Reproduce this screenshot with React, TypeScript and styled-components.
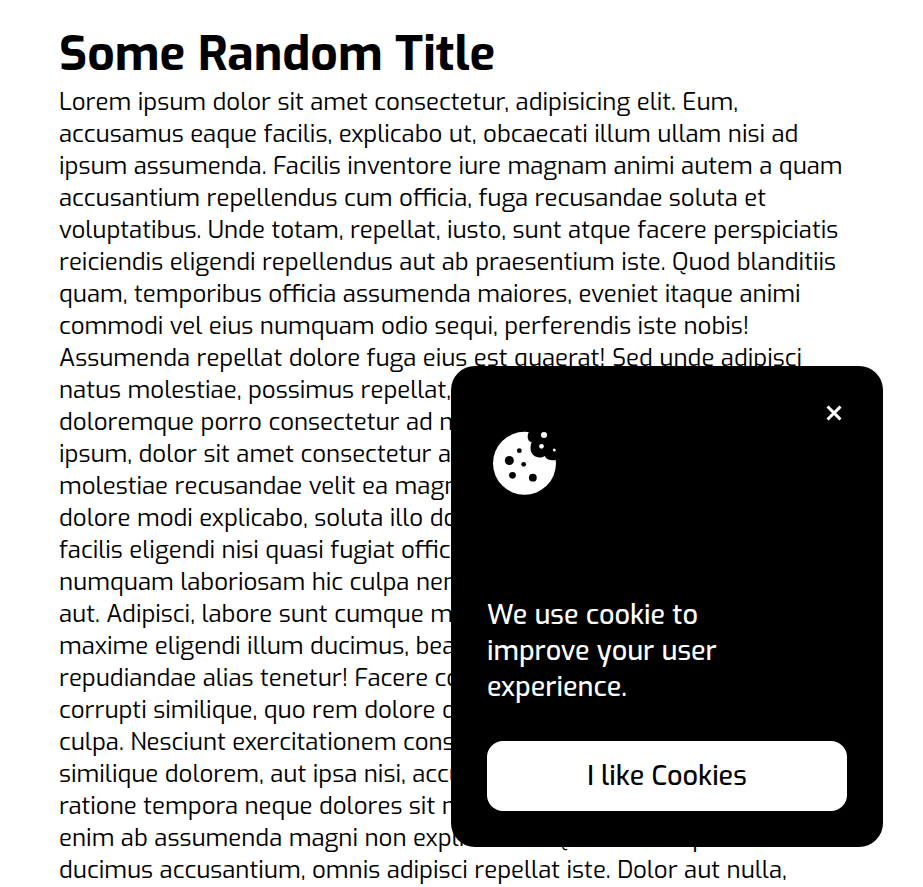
import React from "react";
import styled, { createGlobalStyle } from "styled-components";

const GlobalStyle = createGlobalStyle`
  *, *::before, *::after { box-sizing: border-box; }
  body {
    margin: 0;
    background: #fff;
    color: #000;
    font-family: Exo, "Exo 2", Roboto, sans-serif;
    overflow: hidden;
  }
`;

const Page = styled.main`
  height: 100vh;
  overflow: hidden;
  padding: 22px 59px 0;
`;

const Title = styled.h1`
  margin: 0;
  font-size: 48px;
  font-weight: 700;
  line-height: 64px;
`;

const Article = styled.p`
  margin: 0;
  font-size: 24px;
  font-weight: 400;
  line-height: 32px;
`;

const Line = styled.span`
  display: block;
  white-space: nowrap;
`;

const Banner = styled.aside`
  position: fixed;
  right: 40px;
  bottom: 40px;
  width: 432px;
  height: 481px;
  padding: 36px;
  display: flex;
  flex-direction: column;
  border-radius: 24px;
  background: #000;
  color: #fff;
`;

const BannerHeader = styled.div`
  display: flex;
  justify-content: flex-end;
  height: 29px;
`;

const CloseButton = styled.button`
  width: 26px;
  height: 22px;
  padding: 0;
  border: 0;
  background: none;
  color: inherit;
  display: grid;
  place-items: center;
`;

const CloseIcon = styled.svg`
  display: block;
  width: 16px;
  height: 16px;
`;

const CookieIcon = styled.svg`
  display: block;
  width: 64px;
  height: 64px;
  margin-left: 5px;
`;

const Message = styled.p`
  margin: auto 0 36px;
  font-size: 27px;
  font-weight: 500;
  line-height: 36px;
`;

const AcceptButton = styled.button`
  height: 70px;
  flex: none;
  border: 0;
  border-radius: 16px;
  background: #fff;
  color: #000;
  font: 500 27px/36px Exo, "Exo 2", Roboto, sans-serif;
  padding: 0;
`;

const lines = [
  "Lorem ipsum dolor sit amet consectetur, adipisicing elit. Eum,",
  "accusamus eaque facilis, explicabo ut, obcaecati illum ullam nisi ad",
  "ipsum assumenda. Facilis inventore iure magnam animi autem a quam",
  "accusantium repellendus cum officia, fuga recusandae soluta et",
  "voluptatibus. Unde totam, repellat, iusto, sunt atque facere perspiciatis",
  "reiciendis eligendi repellendus aut ab praesentium iste. Quod blanditiis",
  "quam, temporibus officia assumenda maiores, eveniet itaque animi",
  "commodi vel eius numquam odio sequi, perferendis iste nobis!",
  "Assumenda repellat dolore fuga eius est quaerat! Sed unde adipisci",
  "natus molestiae, possimus repellat, earum",
  "doloremque porro consectetur ad nisi",
  "ipsum, dolor sit amet consectetur adipisicing",
  "molestiae recusandae velit ea magnam",
  "dolore modi explicabo, soluta illo dolor",
  "facilis eligendi nisi quasi fugiat officiis",
  "numquam laboriosam hic culpa nemo",
  "aut. Adipisci, labore sunt cumque maxime",
  "maxime eligendi illum ducimus, beatae",
  "repudiandae alias tenetur! Facere corrupti",
  "corrupti similique, quo rem dolore dolorem",
  "culpa. Nesciunt exercitationem consequatur",
  "similique dolorem, aut ipsa nisi, accusamus",
  "ratione tempora neque dolores sit minima",
  "enim ab assumenda magni non explicabo id. Quia labore ipsa",
  "ducimus accusantium, omnis adipisci repellat iste. Dolor aut nulla,",
];

const message = ["We use cookie to", "improve your user", "experience."];

export default function App() {
  return (
    <>
      <GlobalStyle />
      <Page>
        <Title>Some Random Title</Title>
        <Article>
          {lines.map((line) => (
            <Line key={line}>{line} </Line>
          ))}
        </Article>
      </Page>
      <Banner>
        <BannerHeader>
          <CloseButton aria-label="Close">
            <CloseIcon viewBox="0 0 16 16" stroke="currentColor" strokeWidth="3" strokeLinecap="square">
              <path d="M2.600 2.600 13.400 13.400M13.400 2.600 2.600 13.400" />
            </CloseIcon>
          </CloseButton>
        </BannerHeader>
        <CookieIcon viewBox="66 63 192 192" aria-hidden="true">
          <circle cx="163.5" cy="160" r="94.5" fill="#fff" />
          <path
            d="M176 60V67C171 78 171 93 185 97C181 105 181 116 183 124C188 141 209 148 224 138C230 150 244 154 262 149V60Z"
            fill="#000"
          />
          <g fill="#fff">
            <circle cx="222" cy="75" r="9" />
            <circle cx="214.5" cy="109" r="7" />
            <circle cx="253" cy="120" r="4.5" />
          </g>
          <g fill="#000">
            <circle cx="118" cy="151.500" r="13.5" />
            <circle cx="148" cy="122" r="7.200" />
            <circle cx="161" cy="163" r="7.200" />
            <circle cx="127.500" cy="196" r="10" />
            <circle cx="188.500" cy="203" r="11.700" />
          </g>
        </CookieIcon>
        <Message>
          {message.map((line) => (
            <Line key={line}>{line} </Line>
          ))}
        </Message>
        <AcceptButton>I like Cookies</AcceptButton>
      </Banner>
    </>
  );
}
